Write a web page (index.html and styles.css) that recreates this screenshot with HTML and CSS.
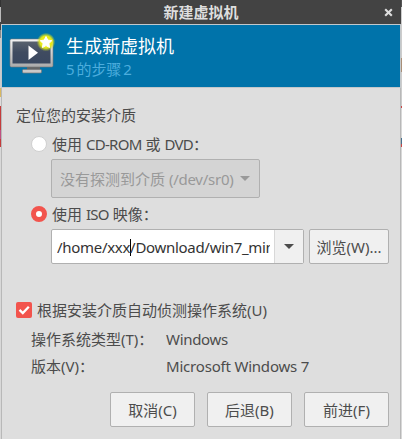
FILE: index.html
```html
<!DOCTYPE html>
<html lang="zh-CN">
<head>
<meta charset="utf-8">
<title>新建虚拟机</title>
<link rel="stylesheet" href="styles.css">
</head>
<body>
<div class="window">
  <div class="titlebar">
    <h1>新建虚拟机</h1>
    <svg class="close" width="9" height="9" viewBox="0 0 9 9"><path d="M1.2 1.2 7.8 7.8M7.8 1.2 1.2 7.8" stroke="#dedede" stroke-width="2.1"/></svg>
  </div>
  <div class="banner">
    <svg class="monitor" width="48" height="44" viewBox="0 0 48 44">
      <defs>
        <linearGradient id="frame" x1="0" y1="0" x2="0" y2="1"><stop offset="0" stop-color="#f4f4f4"/><stop offset="1" stop-color="#aaa"/></linearGradient>
        <linearGradient id="screen" x1="0" y1="0" x2="0" y2="1"><stop offset="0" stop-color="#59626e"/><stop offset=".5" stop-color="#3f4b60"/><stop offset="1" stop-color="#3a4860"/></linearGradient>
        <radialGradient id="glow"><stop offset="0" stop-color="#f2f21a"/><stop offset=".65" stop-color="#e4e818"/><stop offset="1" stop-color="#c8e020" stop-opacity="0"/></radialGradient>
      </defs>
      <path d="M19 34h13v4h-13z" fill="#666"/>
      <rect x="14.500" y="37.500" width="19" height="3.500" rx="1" fill="#c8c8c8" stroke="#777" stroke-width=".7"/>
      <rect x="2" y="7" width="43" height="28" rx="1.500" fill="url(#frame)" stroke="#777" stroke-width=".6"/>
      <rect x="4.500" y="9.500" width="38" height="22" fill="url(#screen)"/>
      <path d="M20.500 13.500v14.500l9.500-7.250z" fill="#fff"/>
      <circle cx="38" cy="10" r="9.300" fill="url(#glow)"/>
      <path d="M38 4.500l1.800 3.600 4 .6-2.900 2.800.7 4-3.600-1.900-3.600 1.900.7-4-2.900-2.800 4-.6z" fill="#fff" stroke="#fff" stroke-linejoin="round"/>
    </svg>
    <div class="heading">
      <h2>生成新虚拟机</h2>
      <p>5 的步骤 2</p>
    </div>
  </div>
  <div class="content">
    <p class="label intro">定位您的安装介质</p>
    <div class="option cdrom"><span class="radio"></span><span class="label">使用 <span class="caps">CD-ROM</span> 或 <span class="caps">DVD</span>：</span></div>
    <div class="select"><span>没有探测到介质 <span class="device">(/dev/sr0)</span></span><i class="arrow"></i></div>
    <div class="option iso"><span class="radio checked"></span><span class="label">使用 <span class="caps">ISO</span> 映像：</span></div>
    <div class="source">
      <div class="combo">
        <div class="entry"><span class="path">/home/xxx<i class="caret"></i>/Download/win7_min</span></div>
        <div class="drop"><i class="arrow"></i></div>
      </div>
      <div class="button browse"><span>浏览(W)...</span></div>
    </div>
    <div class="option detect">
      <svg width="16" height="16" viewBox="0 0 16 16"><rect width="16" height="16" rx="2" fill="#f2544d"/><path d="M3.500 7.800 6.800 11 12.800 4.800" fill="none" stroke="#fff" stroke-width="2.300"/></svg>
      <span class="label">根据安装介质自动侦测操作系统(U)</span>
    </div>
    <dl>
      <dt>操作系统类型(T)：</dt><dd class="os">Windows</dd>
      <dt>版本(V)：</dt><dd class="version">Microsoft Windows 7</dd>
    </dl>
    <div class="actions">
      <div class="button"><span>取消(C)</span></div>
      <div class="button"><span>后退(B)</span></div>
      <div class="button"><span>前进(F)</span></div>
    </div>
  </div>
</div>
</body>
</html>
```
FILE: styles.css
```css
* { box-sizing: border-box; margin: 0; padding: 0; }
body {
  width: 402px; height: 439px; overflow: hidden;
  background:
    linear-gradient(#555 0 7px, #ccc 7px 58px, #a98f78 58px 72px, #ccc 72px 106px, #c44 106px 108px, #d8d8d8 108px 138px, #48708c 138px 144px, #c44 144px 147px, #d8d8d8 147px) right / 1px 100% no-repeat,
    linear-gradient(#333 0 7px, #bbb 7px 22px, #444 22px 30px, #888 30px 38px, #ccc 38px 88px, #d8b860 88px 97px, #ddd 97px 106px, #c43c3c 106px 130px, #c05080 130px 139px, #c43c3c 139px 147px, #d8d8d8 147px) left / 1px 100% no-repeat,
    #dcdcdc;
  font: 15px/20px "Noto Sans", "Noto Sans CJK SC", sans-serif;
  color: #4c4c4c;
}
.window { height: 439px; display: flex; flex-direction: column; }
.titlebar { height: 24px; display: flex; align-items: center; justify-content: center; background: #434343; margin: 0 1px; padding-left: 29px; }
h1 { font: bold 15px/24px "Noto Sans CJK SC", sans-serif; color: #dedede; flex: 1; text-align: center; }
.close { margin: 0 8px 0 12px; }
.banner { display: flex; height: 64px; margin: 0 1px; border: 1px solid #c3c8cb; background: #0073aa; padding: 7px 0 0 6px; }
.heading { margin-left: 10px; padding-top: 1px; }
h2 { font: 18px/24px "Noto Sans CJK SC", sans-serif; color: #fff; }
.heading p { color: #4caddd; line-height: 25px; word-spacing: -1.5px; letter-spacing: -.2px; }
.content { flex: 1; margin: 0 1px; border: solid #b8b8b8; border-width: 0 1px; background: #dedede; padding: 17px 11px 0 14px; }
.label, dt, dd, .button span, .select span, .path { white-space: nowrap; }
.option { display: flex; align-items: center; height: 20px; }
.radio { width: 16px; height: 16px; border-radius: 50%; background: #fff; border: 1px solid #d0d0d0; margin-right: 5px; }
.radio.checked { border: 5px solid #f2544d; }
.caps { letter-spacing: -.7px; }
.cdrom, .iso { padding-left: 15px; }
.cdrom { margin-top: 9px; }
.select { display: flex; align-items: center; justify-content: space-between; width: 209px; height: 39px; margin: 5px 0 0 35px; border: 1px solid #b0b0b0; border-radius: 2px; background: #d4d4d4; color: #999; padding: 0 9px 0 8px; }
.device { letter-spacing: -.25px; }
.arrow { width: 0; height: 0; border: 5px solid transparent; border-top-color: currentColor; border-bottom: 0; }
.iso { margin-top: 6px; }
.source { display: flex; gap: 5px; margin: 5px 0 0 35px; }
.combo { display: flex; width: 253px; height: 35px; border: 1px solid #b0b0b0; border-radius: 2px; background: #fff; }
.entry { flex: 1; min-width: 0; padding: 7px 4px 0 5px; overflow: hidden; color: #333; }
.path { display: block; overflow: hidden; letter-spacing: -.3px; }
.caret { display: inline-block; width: 1px; height: 17px; margin-right: -1px; background: #000; vertical-align: -3px; }
.drop { width: 29px; flex: none; border-left: 1px solid #d8d8d8; background: #f0f0f0; display: flex; align-items: center; justify-content: center; }
.button { width: 85px; height: 35px; display: flex; align-items: center; justify-content: center; border: 1px solid #b0b0b0; border-radius: 2px; background: #f0f0f0; }
.browse { width: 80px; }
.detect { margin-top: 36px; gap: 5px; }
dl { display: grid; grid-template-columns: 135px 1fr; row-gap: 7px; margin: 9px 0 0 15px; }
.os { letter-spacing: -.3px; }
.version { letter-spacing: -.2px; }
.actions { display: flex; justify-content: flex-end; gap: 12px; margin-top: 16px; }
```
